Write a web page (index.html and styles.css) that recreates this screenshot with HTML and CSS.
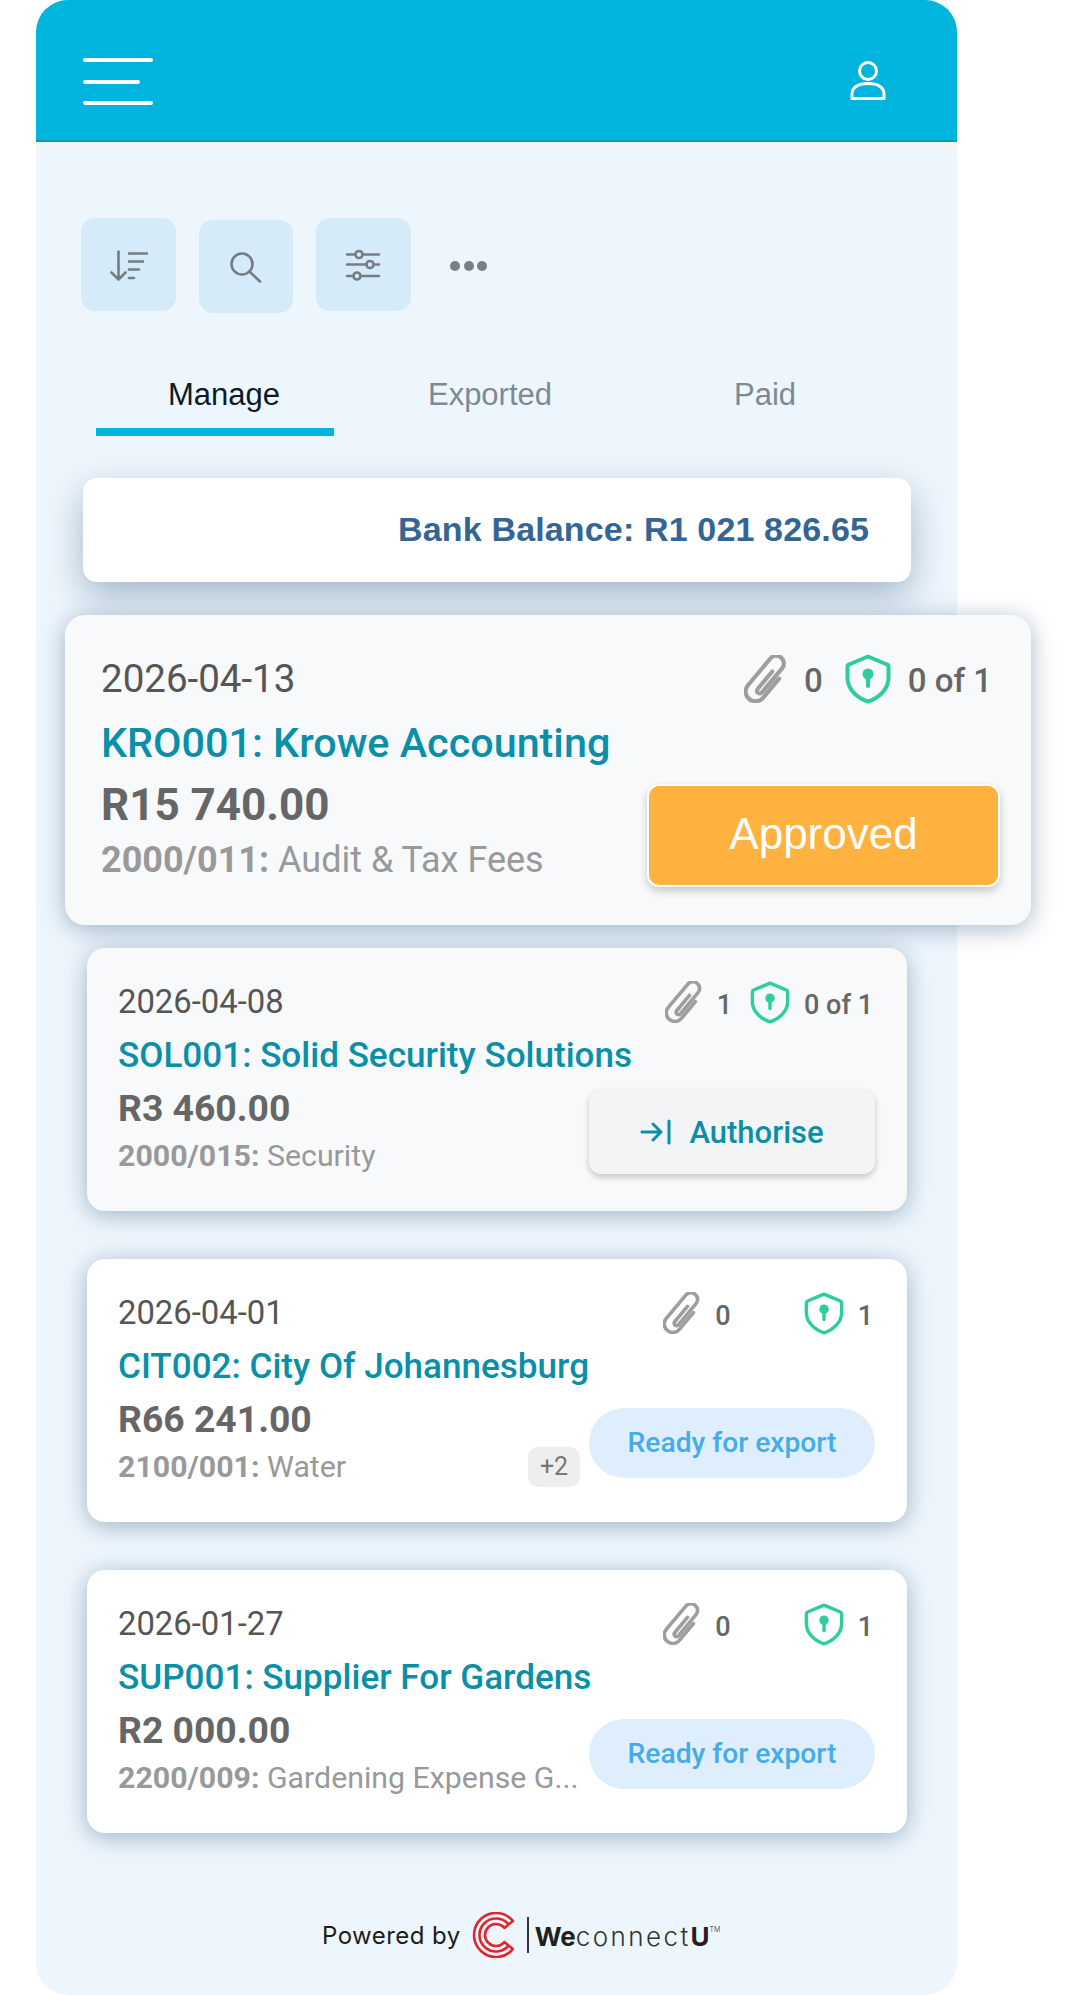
FILE: index.html
```html
<!DOCTYPE html>
<html lang="en">
<head>
<meta charset="utf-8">
<title>Payments</title>
<link rel="stylesheet" href="styles.css">
</head>
<body>
<svg class="defs" width="0" height="0" aria-hidden="true">
  <symbol id="clip" viewBox="3 3 40 44">
    <g transform="translate(23 25) rotate(40)" fill="none" stroke="#9e9e9e" stroke-width="3.800" stroke-linecap="round" stroke-linejoin="round">
      <path d="M9 -8V15A9 9 0 0 1 -9 15V-17A7 7 0 0 1 5 -17V12A2.500 2.500 0 0 1 0 12V-9"/>
    </g>
  </symbol>
  <symbol id="shield" viewBox="0 0 46 50">
    <path d="M23 2.500 42 10.500Q43.500 11 43.500 13V24C43.500 35 34 44 23 47.500 12 44 2.500 35 2.500 24V13Q2.500 11 4 10.500Z" fill="none" stroke="#2ecc9f" stroke-width="4" stroke-linejoin="round"/>
    <circle cx="23" cy="20" r="5.500" fill="#2ecc9f"/>
    <rect x="21" y="20" width="4" height="14" rx="2" fill="#2ecc9f"/>
  </symbol>
</svg>
<div class="phone">
  <header class="topbar">
    <div class="burger"><span></span><span class="short"></span><span></span></div>
    <svg class="user" width="36" height="40" viewBox="0 0 36 40" fill="none" stroke="#fff" stroke-width="3">
      <circle cx="18" cy="10" r="8.500"/>
      <path d="M2 37.500V33C2 26 9 22.500 18 22.500S34 26 34 33V37.500Z" stroke-linejoin="round"/>
    </svg>
  </header>

  <div class="tools">
    <button class="tool">
      <svg width="40" height="40" viewBox="0 0 40 40" fill="none" stroke="#757d83" stroke-width="2.600" stroke-linecap="round" stroke-linejoin="round">
        <path d="M10.500 6.500V34.500M3.500 27.500 10.500 34.500 17.500 27.500"/>
        <path d="M21 8.500H39M21 16.500H35M21 24.500H31M21 33H26"/>
      </svg>
    </button>
    <button class="tool tool-low">
      <svg width="40" height="40" viewBox="0 0 40 40" fill="none" stroke="#757d83" stroke-width="2.600" stroke-linecap="round">
        <circle cx="16" cy="17" r="10.500"/>
        <path d="M24 25 34 34.500"/>
      </svg>
    </button>
    <button class="tool">
      <svg width="40" height="40" viewBox="0 0 40 40" fill="none" stroke="#757d83" stroke-width="2.600" stroke-linecap="round">
        <path d="M4 9.500H36M4 19.500H36M4 31H36"/>
        <g fill="#d5ebfa"><circle cx="16" cy="9.500" r="3.500"/><circle cx="27" cy="19.500" r="3.500"/><circle cx="14" cy="31" r="3.500"/></g>
      </svg>
    </button>
    <svg class="more" width="40" height="12" viewBox="0 0 40 12" fill="#7a7f84">
      <circle cx="6" cy="6" r="5"/><circle cx="20" cy="6" r="5"/><circle cx="33" cy="6" r="5"/>
    </svg>
  </div>

  <nav class="tabs">
    <a class="tab tab-active">Manage</a>
    <a class="tab">Exported</a>
    <a class="tab">Paid</a>
  </nav>

  <div class="balance">Bank Balance: R1 021 826.65</div>

  <article class="card card-main">
    <div class="row">
      <span class="date">2026-04-13</span>
      <div class="meta">
        <svg class="ico-clip"><use href="#clip"/></svg><span class="count">0</span>
        <svg class="ico-shield"><use href="#shield"/></svg><span class="count">0 of 1</span>
      </div>
    </div>
    <div class="title">KRO001: Krowe Accounting</div>
    <div class="bottom">
      <div class="info">
        <div class="amount">R15 740.00</div>
        <div class="code-row"><div class="code"><b>2000/011:</b> Audit &amp; Tax Fees</div></div>
      </div>
      <div class="approved">Approved</div>
    </div>
  </article>

  <article class="card card-tint">
    <div class="row">
      <span class="date">2026-04-08</span>
      <div class="meta">
        <svg class="ico-clip"><use href="#clip"/></svg><span class="count">1</span>
        <svg class="ico-shield"><use href="#shield"/></svg><span class="count">0 of 1</span>
      </div>
    </div>
    <div class="title">SOL001: Solid Security Solutions</div>
    <div class="bottom">
      <div class="info">
        <div class="amount">R3 460.00</div>
        <div class="code-row"><div class="code"><b>2000/015:</b> Security</div></div>
      </div>
      <button class="authorise">
        <svg width="32" height="26" viewBox="0 0 32 26" fill="none" stroke="#0a8fa8" stroke-width="3" stroke-linecap="round" stroke-linejoin="round"><path d="M2 13H21M13 5 21 13 13 21M29 2V24"/></svg>
        Authorise
      </button>
    </div>
  </article>

  <article class="card">
    <div class="row">
      <span class="date">2026-04-01</span>
      <div class="meta">
        <svg class="ico-clip"><use href="#clip"/></svg><span class="count count-wide">0</span>
        <svg class="ico-shield"><use href="#shield"/></svg><span class="count">1</span>
      </div>
    </div>
    <div class="title">CIT002: City Of Johannesburg</div>
    <div class="bottom">
      <div class="info">
        <div class="amount">R66 241.00</div>
        <div class="code-row"><div class="code"><b>2100/001:</b> Water</div><span class="more-badge">+2</span></div>
      </div>
      <div class="pill">Ready for export</div>
    </div>
  </article>

  <article class="card">
    <div class="row">
      <span class="date">2026-01-27</span>
      <div class="meta">
        <svg class="ico-clip"><use href="#clip"/></svg><span class="count count-wide">0</span>
        <svg class="ico-shield"><use href="#shield"/></svg><span class="count">1</span>
      </div>
    </div>
    <div class="title">SUP001: Supplier For Gardens</div>
    <div class="bottom">
      <div class="info">
        <div class="amount">R2 000.00</div>
        <div class="code-row"><div class="code"><b>2200/009:</b> Gardening Expense G...</div></div>
      </div>
      <div class="pill">Ready for export</div>
    </div>
  </article>

  <footer class="powered">
    <span class="powered-by">Powered by</span>
    <svg class="logo" width="44" height="46" viewBox="0 0 44 46" fill="none" stroke="#e3242b" stroke-width="2.600" stroke-linejoin="round">
      <path d="M40.900 8.900A22 22 0 1 0 40.900 37.100L32.400 30.100A11 11 0 1 1 32.400 15.900Z"/>
      <path d="M36.600 12.400A16.500 16.500 0 1 0 36.600 33.600"/>
    </svg>
    <span class="divider"></span>
    <span class="brand"><b>We</b>connect<b>U</b><sup>TM</sup></span>
  </footer>
</div>
</body>
</html>
```
FILE: styles.css
```css
* { box-sizing: border-box; }
html, body { margin: 0; padding: 0; background: #fff; }
body { width: 1078px; height: 1995px; overflow: hidden; font-family: Roboto, sans-serif; }
.defs { position: absolute; }

.phone {
  width: 921px;
  height: 1995px;
  margin-left: 36px;
  background: #eef6fd;
  border-radius: 32px;
  display: flex;
  flex-direction: column;
  align-items: flex-start;
}

.topbar {
  width: 100%;
  height: 142px;
  flex: none;
  background: #00b5dd;
  border-bottom: 2px solid #0e9ab5;
  border-radius: 32px 32px 0 0;
  box-shadow: 0 8px 0 #f2f4f6;
  display: flex;
  justify-content: space-between;
  padding: 58px 71px 0 47px;
}
.burger { width: 70px; height: 47px; display: flex; flex-direction: column; justify-content: space-between; }
.burger span { display: block; height: 4px; background: #fff; border-radius: 2px; }
.burger .short { width: 57px; }
.user { margin-top: 3px; }

.tools { display: flex; align-items: flex-start; margin: 76px 0 0 45px; gap: 23px; }
.tool {
  width: 94.500px;
  height: 93px;
  border: 0;
  padding: 0;
  background: #d5ebfa;
  border-radius: 14px;
  display: flex;
  align-items: center;
  justify-content: center;
}
.tool-low { margin-top: 2px; }
.more { margin: 42px 0 0 15px; }

.tabs {
  display: grid;
  grid-template-columns: 238px 312px 238px;
  margin: 58px 0 0 60px;
  font-family: "Liberation Sans", Arial, sans-serif;
  font-size: 31px;
}
.tab { height: 65px; padding-top: 6px; text-align: center; color: #7c8a94; }
.tab-active { color: #0d1a26; padding-left: 18px; border-bottom: 8px solid #00b5dd; }

.balance {
  width: 828px;
  height: 104px;
  margin: 42px 0 0 47px;
  padding-right: 42px;
  background: #fff;
  border-radius: 14px;
  box-shadow: 0 14px 36px rgba(60, 95, 130, .42);
  font-family: "Liberation Sans", Arial, sans-serif;
  font-weight: 700;
  font-size: 34px;
  letter-spacing: .15px;
  line-height: 102px;
  text-align: right;
  color: #336695;
}

.card {
  width: 820px;
  height: 263px;
  margin: 48px 0 0 51px;
  padding: 34px 32px 0 31px;
  background: #fff;
  border-radius: 18px;
  box-shadow: 0 4px 24px rgba(60, 95, 130, .45);
  position: relative;
}
.card-tint { background: #f8f9fb; margin-top: 23px; }
.card-main {
  width: 966px;
  height: 310px;
  margin: 33px 0 0 29px;
  padding: 41px 30px 0 36px;
  background: #f8f9fb;
  border-radius: 20px;
}

.row { display: flex; justify-content: space-between; align-items: center; height: 40px; }
.date { font-size: 32.800px; line-height: 40px; color: #555; }
.meta { display: flex; align-items: center; margin-right: 2px; }
.ico-clip { width: 38px; height: 42px; margin-right: 14px; }
.ico-shield { width: 40px; height: 43px; margin-left: 18px; margin-right: 14px; }
.count { font-size: 27px; font-weight: 500; color: #666; line-height: 40px; padding-top: 5px; }
.count-wide { margin-right: 73px; }
.card .count-wide + .ico-shield { margin-left: 0; }

.title { margin-top: 13px; font-size: 35.100px; font-weight: 500; line-height: 40px; color: #0a8fa8; white-space: nowrap; }
.bottom { display: flex; align-items: center; margin-top: 13px; gap: 9px; }
.info { width: 462px; flex: none; }
.amount { font-size: 37.300px; font-weight: 700; line-height: 40px; color: #666; }
.code-row { display: flex; align-items: center; justify-content: space-between; gap: 8px; margin-top: 8px; height: 40px; }
.code { font-size: 30.300px; line-height: 40px; color: #999; white-space: nowrap; min-width: 0; }
.code b { font-weight: 700; }

.more-badge { flex: none; width: 52px; height: 40px; border-radius: 10px; background: #eee; color: #777; font-size: 25px; line-height: 40px; text-align: center; }

.authorise {
  flex: none;
  width: 286px;
  height: 84px;
  border: 0;
  border-radius: 12px;
  background: #f3f4f5;
  box-shadow: 0 3px 6px rgba(0, 0, 0, .22);
  color: #0a8fa8;
  font-family: Roboto, sans-serif;
  font-size: 31px;
  font-weight: 500;
  display: flex;
  align-items: center;
  justify-content: center;
  gap: 17px;
}
.pill {
  flex: none;
  width: 286px;
  height: 70px;
  border-radius: 35px;
  background: #deeefc;
  color: #45ace8;
  font-size: 28.200px;
  font-weight: 500;
  line-height: 70px;
  text-align: center;
}

.card-main .row { height: 46px; }
.card-main .date { font-size: 38.500px; line-height: 46px; }
.card-main .meta { margin-right: 9px; }
.card-main .ico-clip { width: 44px; height: 48px; margin-right: 16px; }
.card-main .ico-shield { width: 46px; height: 50px; margin-left: 22px; margin-right: 17px; }
.card-main .count { font-size: 33px; padding-top: 4px; }
.card-main .title { margin-top: 18px; font-size: 41.300px; line-height: 46px; }
.card-main .bottom { margin-top: 16px; gap: 85px; align-items: flex-start; }
.card-main .info { width: 462px; }
.card-main .amount { font-size: 44px; line-height: 46px; }
.card-main .code-row { height: 46px; margin-top: 9px; }
.card-main .code { font-size: 36px; line-height: 46px; }
.approved {
  flex: none;
  width: 353px;
  height: 103px;
  margin: 2px 0 0 -1px;
  border: 2px solid #fff;
  border-radius: 12px;
  background: #ffb240;
  box-shadow: 0 4px 8px rgba(0, 0, 0, .2);
  color: #fff;
  font-family: "Liberation Sans", Arial, sans-serif;
  font-size: 44px;
  line-height: 95px;
  text-align: center;
}

.powered { display: flex; align-items: center; align-self: stretch; margin: 77px 0 0 286px; height: 50px; }
.powered-by { font-family: Inter, sans-serif; font-size: 24px; letter-spacing: .45px; color: #1c1c1c; margin-right: 11px; white-space: nowrap; }
.divider { width: 2px; height: 36px; background: #333; margin: 0 6px 0 11px; }
.brand { font-family: Inter, sans-serif; font-size: 26px; font-weight: 300; color: #333; letter-spacing: 2.400px; white-space: nowrap; margin-top: 3px; }
.brand b { font-weight: 700; color: #231f20; letter-spacing: 0; }
.brand sup { font-size: 7px; vertical-align: 14px; letter-spacing: 0; line-height: 0; }
```
